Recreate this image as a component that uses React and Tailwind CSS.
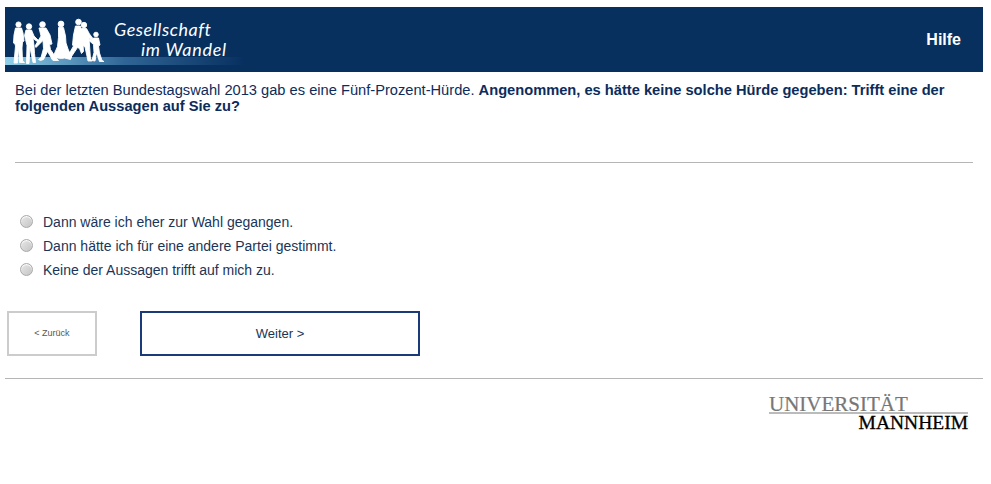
const options = [
  "Dann wäre ich eher zur Wahl gegangen.",
  "Dann hätte ich für eine andere Partei gestimmt.",
  "Keine der Aussagen trifft auf mich zu.",
];

function People() {
  return (
    <svg width="110" height="65" viewBox="0 0 110 65" className="absolute left-0 top-0" fill="#fff" stroke="#fff" strokeWidth="0.9" strokeLinejoin="round">
      {/* man on the left */}
      <circle cx="13.5" cy="17.5" r="2.6" />
      <path d="M10.500 21h6l1.500 5 1 8-1.500 1-.5 6 .5 13 2 1.500h-5l-1-15-1 15.500h-3.500l1.500-17-.5-2-1.500-1 .5-8z" />
      {/* woman holding hands */}
      <circle cx="24" cy="19.500" r="2.700" />
      <path d="M21 23h5.500l2.500 6 4 4 1 .5-1 1.500-5-3.500 1 7 .5 8 1 9h-2.500l-3-15-1 16h-2.500l.5-18-1.500-6-1-4z" />
      {/* man in a coat */}
      <circle cx="37.500" cy="17.500" r="2.800" />
      <path d="M34 21h7l4 7 2 9-2.500.5 1 5 6 9 2 2h-5.500l-5.500-9-4 8-3 1-2-1 2.500-2 2.500-9-.5-8-7 7-1-1.500 6-10z" />
      {/* woman in a long dress */}
      <circle cx="56" cy="17" r="2.900" />
      <path d="M53.500 20.500h5l2 8.500 .5 7 2 6 3.500 8-1 2.500-6-1.500-3 .5-4-.5-6 1 2.500-4.500 3.500-8 1-9z" />
      {/* tall man */}
      <circle cx="73.500" cy="15" r="2.800" />
      <path d="M70.500 19h5l2 8 .5 10 .5 7.500-2 2-2-5-2-1-7 10.500-3-1.500 6-10.500-1-1 1-10z" />
      {/* man with the child */}
      <circle cx="79" cy="18" r="2.700" />
      <path d="M76.500 21.500h5l3 5.500 3 4 2.500 2-1 1.500-5-3.500 .5 7 1 14 1.500 2h-4l-3-14-4-3 .5-10z" />
      {/* child */}
      <circle cx="91" cy="27.500" r="2.300" />
      <path d="M88.500 31h5l1.500 7-1.500 1 1 7 2.500 7.500 2 1h-4.500l-3-8.500-1.500 8-3-.5 2-8-.5-8-4.500-4 1-1.500 3 2z" />
    </svg>
  );
}

function Logo() {
  return (
    <div className="relative h-[65px] w-[240px] overflow-hidden">
      {/* pale band under the figures */}
      <div className="absolute left-0 top-[50px] h-[7.5px] w-full bg-gradient-to-r from-[#8fd0ea] via-[#2f6596] to-[#07305f]" />
      <People />
      <div className="absolute left-[109px] top-[12px] font-['Lato',sans-serif] text-[18px] leading-[20px] text-white italic">
        <p className="tracking-[0.55px]">Gesellschaft</p>
        <p className="pl-[27px] tracking-[0.7px]">im Wandel</p>
      </div>
    </div>
  );
}

function Radio() {
  return (
    <span className="mb-[2px] h-[13px] w-[13px] shrink-0 rounded-full border border-[#a9a9a9] bg-gradient-to-br from-[#e8e8e8] to-[#c4c4c4] shadow-[inset_0_1px_1px_#fff]" />
  );
}

export default function App() {
  return (
    <div className="min-h-[484px] bg-white px-[5px] pt-[7px] pr-[8px] font-['Liberation_Sans',Arial,sans-serif] text-[#0c2c5c]">
      <header className="flex h-[65px] items-center justify-between bg-[#07305f]">
        <Logo />
        <span className="pr-[22px] text-[16px] font-bold text-white">Hilfe</span>
      </header>

      <p className="px-[10px] pt-[10px] text-[14.67px] leading-[16px]">
        Bei der letzten Bundestagswahl 2013 gab es eine Fünf-Prozent-Hürde.{" "}
        <b>Angenommen, es hätte keine solche Hürde gegeben: Trifft eine der folgenden Aussagen auf Sie zu?</b>
      </p>

      <hr className="mx-[10px] mt-[48px] border-[#b5b5b5]" />

      <div className="mt-[51px] flex flex-col gap-[8px] pl-[15px] text-[14px] leading-[16px] text-[#1a3558]">
        {options.map((label) => (
          <label key={label} className="flex items-center gap-[10px]">
            <Radio />
            {label}
          </label>
        ))}
      </div>

      <div className="mt-[33px] flex pl-[2px]">
        <button className="h-[45px] w-[90px] border-2 border-[#cccccc] text-[9px] text-[#555]">&lt; Zurück</button>
        <button className="ml-[43px] h-[45px] w-[280px] border-2 border-[#1a3a78] text-[13px] text-[#1a3558]">Weiter &gt;</button>
      </div>

      <hr className="mt-[22px] border-[#b5b5b5]" />

      <div className="flex justify-end pt-[15px] pr-[15px]">
        <div className="relative h-[38px] w-[199px] font-['Liberation_Serif',serif]">
          <span className="absolute left-0 top-[-2px] text-[21px] leading-[24px] text-[#777] [-webkit-text-stroke:0.2px_#777]">UNIVERSITÄT</span>
          <div className="absolute left-0 top-[18px] h-[2px] w-full bg-[#bbbbbb]" />
          <span className="absolute right-0 top-[18px] text-[19.5px] leading-[22px] text-black [-webkit-text-stroke:0.3px_#000]">MANNHEIM</span>
        </div>
      </div>
    </div>
  );
}
